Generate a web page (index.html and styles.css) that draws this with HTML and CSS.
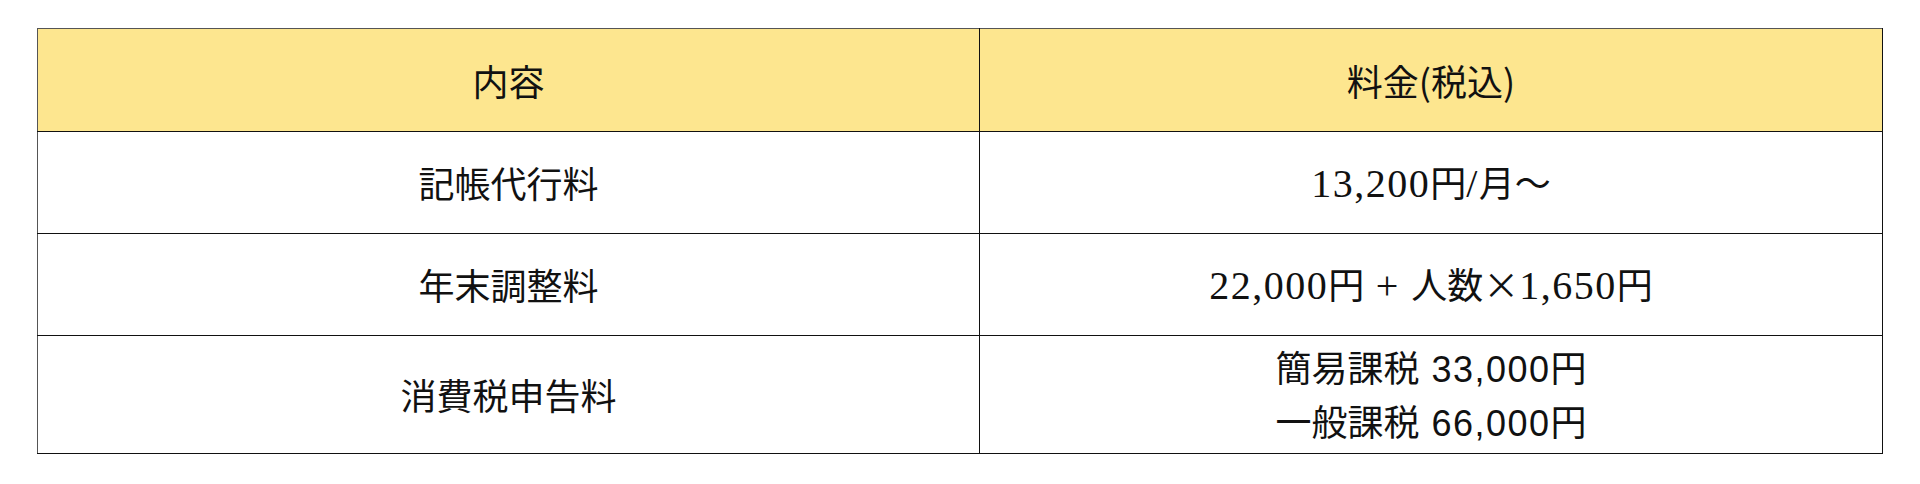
FILE: index.html
```html
<!DOCTYPE html>
<html lang="ja">
<head>
<meta charset="utf-8">
<title>料金表</title>
<link rel="stylesheet" href="styles.css">
</head>
<body>
<table class="price-table">
  <colgroup>
    <col class="col-item">
    <col class="col-price">
  </colgroup>
  <thead>
    <tr class="row-head">
      <th>内容</th>
      <th>料金(税込)</th>
    </tr>
  </thead>
  <tbody>
    <tr class="row">
      <td>記帳代行料</td>
      <td><span class="num">13,200</span>円<span class="num">/</span>月～</td>
    </tr>
    <tr class="row">
      <td>年末調整料</td>
      <td><span class="num">22,000</span>円<span class="num"> + </span>人数×<span class="num">1,650</span>円</td>
    </tr>
    <tr class="row row-tall">
      <td class="two-line">消費税申告料</td>
      <td class="two-line">簡易課税 <span class="num-sans">33,000</span>円<br>一般課税 <span class="num-sans">66,000</span>円</td>
    </tr>
  </tbody>
</table>
</body>
</html>
```
FILE: styles.css
```css
html, body {
  margin: 0;
  padding: 0;
  background: #ffffff;
}
body {
  padding: 28px 37px;
  font-family: "Noto Sans CJK JP", "Liberation Sans", sans-serif;
  color: #111;
}
.price-table {
  width: 1846px;
  border-collapse: collapse;
  table-layout: fixed;
  border-top: 1px solid #555;
  border-left: 1px solid #555;
  border-right: 1px solid #555;
  border-bottom: 1px solid #222;
}
.col-item { width: 942px; }
.price-table th,
.price-table td {
  text-align: center;
  vertical-align: middle;
  font-size: 36px;
  font-weight: 400;
  line-height: 53px;
  padding: 0;
  border-right: 1px solid #111;
  border-bottom: 1px solid #111;
}
.row-head th {
  height: 102px;
  background: #fde68f;
}
.row td { height: 101px; }
.row-tall td { height: 117px; }
.price-table td.two-line {
  line-height: 51px;
  word-spacing: 4px;
}
.num {
  font-family: "Liberation Serif", serif;
  font-size: 40px;
  letter-spacing: 1.5px;
}
.num-sans {
  font-family: "Liberation Sans", sans-serif;
  letter-spacing: 1.5px;
}
```
